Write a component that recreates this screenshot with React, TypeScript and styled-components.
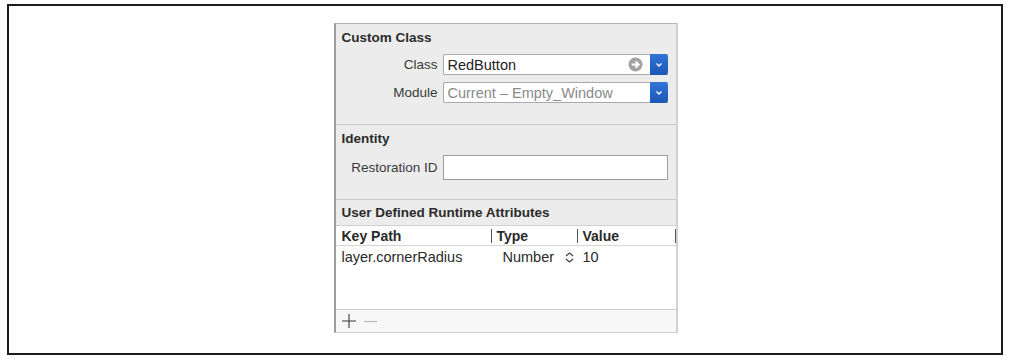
import React from "react";
import styled, { createGlobalStyle } from "styled-components";

const Global = createGlobalStyle`
  html, body { margin: 0; padding: 0; background: #fff; }
  body { font-family: "Liberation Sans", Arial, sans-serif; }
`;

const Frame = styled.div`
  margin: 4px 0 0 7px;
  width: 996px;
  height: 351px;
  box-sizing: border-box;
  border: 2px solid #1c1c1c;
  display: flex;
  flex-direction: column;
  align-items: center;
  padding-top: 17px;
  padding-left: 1px;
`;

const Panel = styled.div`
  width: 344px;
  height: 310px;
  box-sizing: border-box;
  background: #ececec;
  border: 1px solid #c4c4c4;
  border-right: 2px solid #d2d2d2;
  border-left: 2px solid #9d9d9d;
  border-top: 1px solid #b5b5b5;
  display: flex;
  flex-direction: column;
  font-size: 13.5px;
  color: #2a2a2a;
`;

const Section = styled.div<{ $h: number; $pt: number; $last?: boolean }>`
  height: ${(p) => p.$h}px;
  box-sizing: border-box;
  padding-top: ${(p) => p.$pt}px;
  border-bottom: ${(p) => (p.$last ? "none" : "1px solid #c9c9c9")};
  display: flex;
  flex-direction: column;
`;

const Title = styled.div`
  font-weight: bold;
  font-size: 13.5px;
  line-height: 15px;
  padding-left: 6px;
  color: #2b2b2b;
`;

const Row = styled.div<{ $mt: number }>`
  display: flex;
  align-items: center;
  margin-top: ${(p) => p.$mt}px;
`;

const Label = styled.div`
  width: 102px;
  text-align: right;
  padding-right: 5px;
  color: #3a3a3a;
  font-size: 13.5px;
`;

const Field = styled.div<{ $h: number }>`
  width: 225px;
  height: ${(p) => p.$h}px;
  box-sizing: border-box;
  display: flex;
  align-items: stretch;
  background: #fff;
  border: 1px solid #a9a9a9;
  border-right: none;
  border-radius: 2px 0 0 2px;
`;

const FieldText = styled.div<{ $dim?: boolean }>`
  flex: 1;
  display: flex;
  align-items: center;
  padding-left: 4px;
  font-size: 14.5px;
  white-space: nowrap;
  color: ${(p) => (p.$dim ? "#8a8a8a" : "#222")};
`;

const Blue = styled.div`
  width: 18px;
  margin: -1px 0;
  background: linear-gradient(#3274d6, #1b57b5);
  border-radius: 0 3px 3px 0;
  display: flex;
  align-items: center;
  justify-content: center;
`;

const GoIcon = styled.div`
  display: flex;
  align-items: center;
  padding-right: 7px;
`;

const PlainField = styled.div`
  width: 225px;
  height: 25px;
  box-sizing: border-box;
  background: #fff;
  border: 1px solid #9c9c9c;
`;

const Table = styled.div`
  margin-top: 5px;
  flex: 1;
  display: flex;
  flex-direction: column;
  background: #fff;
  border-top: 1px solid #d0d0d0;
`;

const HeaderRow = styled.div`
  height: 19px;
  display: flex;
  align-items: center;
  border-bottom: 1px solid #d6d6d6;
  font-weight: bold;
  font-size: 14px;
  color: #2a2a2a;
`;

const HeadCell = styled.div<{ $w: number; $sep?: boolean }>`
  width: ${(p) => p.$w}px;
  height: 14px;
  flex: none;
  box-sizing: border-box;
  padding-left: ${(p) => (p.$sep ? 5 : 6)}px;
  border-left: ${(p) => (p.$sep ? "1px solid #555" : "none")};
  line-height: 14px;
  white-space: nowrap;
`;

const Rows = styled.div`
  height: 64px;
  border-bottom: 1px solid #cfcfcf;
  padding-top: 3px;
  box-sizing: border-box;
`;

const DataRow = styled.div`
  display: flex;
  align-items: center;
  height: 16px;
  font-size: 14.5px;
  color: #2a2a2a;
`;

const Cell = styled.div<{ $w: number; $pl: number }>`
  width: ${(p) => p.$w}px;
  flex: none;
  padding-left: ${(p) => p.$pl}px;
  box-sizing: border-box;
  display: flex;
  align-items: center;
  gap: 11px;
  white-space: nowrap;
`;

const Footer = styled.div`
  height: 22px;
  display: flex;
  align-items: center;
  gap: 8px;
  padding-left: 6px;
  background: #f7f7f7;
  border-bottom: 1px solid #cdcdcd;
`;

const Chevron = () => (
  <svg width="8" height="6" viewBox="0 0 8 6">
    <path d="M1.5 1.5 L4 4 L6.5 1.5" stroke="#fff" strokeWidth="1.3" fill="none" />
  </svg>
);

export default function App() {
  return (
    <>
      <Global />
      <Frame>
        <Panel>
          <Section $h={101} $pt={6}>
            <Title>Custom Class</Title>
            <Row $mt={9}>
              <Label>Class</Label>
              <Field $h={21}>
                <FieldText>RedButton</FieldText>
                <GoIcon>
                  <svg width="15" height="15" viewBox="0 0 15 15">
                    <circle cx="7.5" cy="7.5" r="7" fill="#a3a3a3" />
                    <path d="M3.8 7.5 H10.5 M7.6 4.5 L10.6 7.5 L7.6 10.5" stroke="#fff" strokeWidth="2" fill="none" />
                  </svg>
                </GoIcon>
                <Blue><Chevron /></Blue>
              </Field>
            </Row>
            <Row $mt={7}>
              <Label>Module</Label>
              <Field $h={21}>
                <FieldText $dim>Current – Empty_Window</FieldText>
                <Blue><Chevron /></Blue>
              </Field>
            </Row>
          </Section>
          <Section $h={75} $pt={6}>
            <Title>Identity</Title>
            <Row $mt={9}>
              <Label>Restoration ID</Label>
              <PlainField />
            </Row>
          </Section>
          <Section $h={132} $pt={5} $last>
            <Title>User Defined Runtime Attributes</Title>
            <Table>
              <HeaderRow>
                <HeadCell $w={155}>Key Path</HeadCell>
                <HeadCell $w={86} $sep>Type</HeadCell>
                <HeadCell $w={98} $sep>Value</HeadCell>
                <HeadCell $w={1} $sep />
              </HeaderRow>
              <Rows>
                <DataRow>
                  <Cell $w={167} $pl={6}>layer.cornerRadius</Cell>
                  <Cell $w={80} $pl={0}>
                    Number
                    <svg width="9" height="11" viewBox="0 0 9 11">
                      <path d="M1 4 L4.5 1 L8 4 M1 7 L4.5 10 L8 7" stroke="#444" strokeWidth="1.3" fill="none" />
                    </svg>
                  </Cell>
                  <Cell $w={60} $pl={0}>10</Cell>
                </DataRow>
              </Rows>
              <Footer>
                <svg width="14" height="14" viewBox="0 0 14 14">
                  <path d="M7 0 V14 M0 7 H14" stroke="#3a3a3a" strokeWidth="1.1" />
                </svg>
                <svg width="13" height="13" viewBox="0 0 13 13">
                  <path d="M0 6.5 H13" stroke="#b5b5b5" strokeWidth="1.1" />
                </svg>
              </Footer>
            </Table>
          </Section>
        </Panel>
      </Frame>
    </>
  );
}
